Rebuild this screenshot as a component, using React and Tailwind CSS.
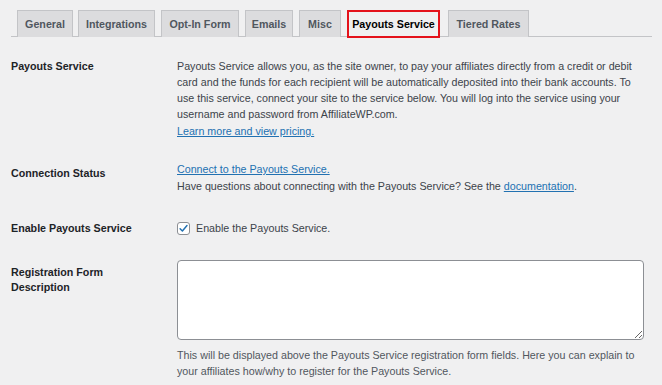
import React from "react";

const tabs = [
  { label: "General", className: "w-[56px] ml-[6px]" },
  { label: "Integrations", className: "w-[77px] ml-[5px]" },
  { label: "Opt-In Form", className: "w-[78px] ml-[6px]" },
  { label: "Emails", className: "w-[48px] ml-[6px]" },
  { label: "Misc", className: "w-[42px] ml-[6px]" },
  { label: "Payouts Service", active: true, className: "w-[93px] ml-[6px]" },
  { label: "Tiered Rates", className: "w-[81px] ml-[8px]" },
];

const Row = ({ label, labelClass = "", children, className = "" }) => (
  <div className={"flex " + className}>
    <div className={"w-[166px] shrink-0 font-semibold text-[#1d2327] " + labelClass}>
      {label}
    </div>
    <div className="flex-1">{children}</div>
  </div>
);

const App = () => {
  return (
    <div className="w-[662px] h-[385px] overflow-hidden bg-[#f0f0f1] text-[10.7px] leading-[16px] text-[#3c434a] font-['Liberation_Sans',Arial,sans-serif]">
      {/* tabs */}
      <div className="pt-[10px] pl-[11px] pr-[10px]">
        <div className="flex h-[27px] border-b border-[#c3c4c7]">
          {tabs.map((t) =>
            t.active ? (
              <div
                key={t.label}
                className={
                  "h-[28px] flex items-center justify-center border-2 border-[#e4121b] bg-[#f0f0f1] font-semibold text-[#000] " +
                  t.className
                }
              >
                {t.label}
              </div>
            ) : (
              <div
                key={t.label}
                className={
                  "h-[27px] flex items-center justify-center border border-b-0 border-[#c3c4c7] bg-[#dcdcde] font-semibold text-[#50575e] " +
                  t.className
                }
              >
                {t.label}
              </div>
            )
          )}
        </div>
      </div>

      <div className="pl-[11px] pr-[12px] pt-[21px]">
        <Row label="Payouts Service">
          <p>
            Payouts Service allows you, as the site owner, to pay your affiliates directly from a credit or debit
            card and the funds for each recipient will be automatically deposited into their bank accounts. To
            use this service, connect your site to the service below. You will log into the service using your
            username and password from AffiliateWP.com.
          </p>
          <a className="block mt-[1px] text-[#2271b1] underline">Learn more and view pricing.</a>
        </Row>

        <Row label="Connection Status" labelClass="pt-[4px]" className="mt-[22px]">
          <a className="block text-[#2271b1] underline">Connect to the Payouts Service.</a>
          <p className="mt-[1px]">
            Have questions about connecting with the Payouts Service? See the{" "}
            <a className="text-[#2271b1] underline">documentation</a>.
          </p>
        </Row>

        <Row label="Enable Payouts Service" className="mt-[26px]">
          <label className="flex items-center gap-[6px]">
            <span className="w-[13px] h-[13px] rounded-[3px] border border-[#8c8f94] bg-white flex items-center justify-center">
              <svg viewBox="0 0 12 12" className="w-[11px] h-[11px]">
                <path d="M2.3 6.2 L4.8 8.7 L9.8 2.8" fill="none" stroke="#2271b1" strokeWidth="1.6" strokeLinecap="round" strokeLinejoin="round" />
              </svg>
            </span>
            Enable the Payouts Service.
          </label>
        </Row>

        <Row label={<>Registration Form<br />Description</>} labelClass="pt-[5px] leading-[15px]" className="mt-[24px]">
          <textarea
            readOnly
            className="block w-[467px] h-[80px] rounded-[4px] border border-[#8c8f94] bg-white"
          />
          <p className="mt-[7px] text-[#50575e]">
            This will be displayed above the Payouts Service registration form fields. Here you can explain to
            your affiliates how/why to register for the Payouts Service.
          </p>
        </Row>
      </div>
    </div>
  );
};

export default App;
